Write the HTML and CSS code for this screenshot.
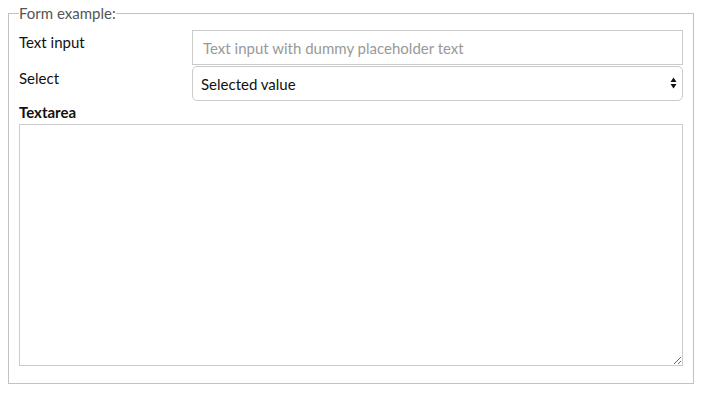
FILE: index.html
```html
<!DOCTYPE html>
<html lang="en">
<head>
    <meta charset="UTF-8">
    <title>Form example</title>
    <link rel="stylesheet" href="styles.css">
</head>
<body>

<form class="demo-form">
    <fieldset>
        <legend>Form example:</legend>

        <div class="row">
            <label for="text-input">Text input</label>
            <input type="text" id="text-input" placeholder="Text input with dummy placeholder text">
        </div>

        <div class="row">
            <label for="select-input">Select</label>
            <span class="select-wrap">
                <select id="select-input">
                    <option>Selected value</option>
                    <option>Other value</option>
                </select>
                <svg class="select-arrow" width="7" height="12" viewBox="0 0 7 12">
                    <path d="M3.5 0.5 L6.5 5 L0.5 5 Z M0.5 7 L6.5 7 L3.5 11.5 Z" fill="#111"/>
                </svg>
            </span>
        </div>

        <label class="block-label" for="textarea-input">Textarea</label>
        <textarea id="textarea-input"></textarea>
    </fieldset>
</form>

</body>
</html>
```

FILE: styles.css
```css
body {
    margin: 0;
    font-family: Lato, "Open Sans", Arial, sans-serif;
    font-size: 15px;
    line-height: 20px;
    color: #111;
    background-color: #fff;
}
.demo-form {
    padding: 3px 11px 0 8px;
}
fieldset {
    margin: 0;
    padding: 7px 10px 17px 10px;
    border: 1px solid #c2c2c2;
    min-width: 0;
}
legend {
    padding: 0;
    margin-left: 0;
    color: #555;
    line-height: 20px;
}
.row {
    display: flex;
    align-items: flex-start;
    margin-bottom: 1px;
}
.row label {
    width: 173px;
    flex-shrink: 0;
    padding-top: 2px;
}
input[type="text"], select, textarea {
    box-sizing: border-box;
    font-family: inherit;
    font-size: 15px;
    color: #111;
    background-color: #fff;
    border: 1px solid #cbcbcb;
    outline: none;
}
input[type="text"] {
    flex: 1;
    height: 35px;
    padding: 0 10px;
    border-radius: 0;
}
input[type="text"]::placeholder {
    color: #999;
}
.select-wrap {
    position: relative;
    flex: 1;
    display: block;
}
select {
    width: 100%;
    height: 35px;
    padding: 0 24px 0 8px;
    border-radius: 5px;
    -webkit-appearance: none;
    appearance: none;
}
.select-arrow {
    position: absolute;
    right: 6px;
    top: 11px;
    pointer-events: none;
}
.block-label {
    display: block;
    font-weight: bold;
    margin-top: 0;
    margin-bottom: 2px;
}
textarea {
    display: block;
    width: 100%;
    height: 242px;
    resize: vertical;
    border-radius: 0;
}
```
